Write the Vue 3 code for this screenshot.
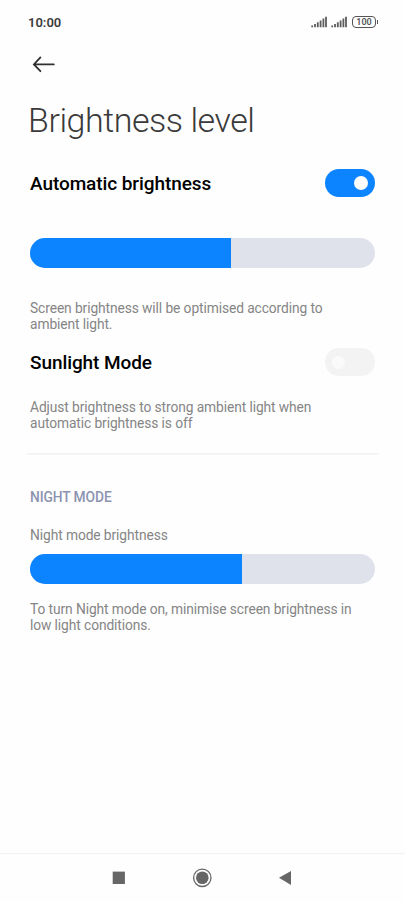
<template>
  <div class="screen">
    <header class="status">
      <span class="time">10:00</span>
      <div class="status-icons">
        <svg v-for="n in 2" :key="n" class="signal" width="16" height="12" viewBox="0 0 16 12">
          <path d="M1.2 11.2V9.4M4 11.2V8M6.8 11.2V6.2M9.6 11.2V4.4M12.4 11.2V2.6M15 11.2V.8" />
        </svg>
        <div class="battery"><span>100</span></div>
      </div>
    </header>

    <button class="back" type="button" aria-label="Back">
      <svg width="24" height="18" viewBox="0 0 24 18">
        <path d="M8.4 2.4L1.9 9.4l6.5 6.8M2.4 9.4h19.4" />
      </svg>
    </button>

    <h1 class="title">Brightness level</h1>

    <main class="content">
      <div class="row">
        <h2 class="label">Automatic brightness</h2>
        <button class="toggle" :class="{ on: auto }" type="button" @click="auto = !auto"></button>
      </div>
      <div class="slider slider-main">
        <div class="fill" :style="{ width: brightness + '%' }"></div>
      </div>
      <p class="text">Screen brightness will be optimised according to<br>ambient light.</p>

      <div class="row row-sunlight">
        <h2 class="label">Sunlight Mode</h2>
        <button class="toggle" :class="{ on: sunlight }" type="button" disabled></button>
      </div>
      <p class="text text-sunlight">Adjust brightness to strong ambient light when<br>automatic brightness is off</p>

      <hr class="divider">

      <h3 class="section">NIGHT MODE</h3>
      <p class="text">Night mode brightness</p>
      <div class="slider slider-night">
        <div class="fill" :style="{ width: nightBrightness + '%' }"></div>
      </div>
      <p class="text">To turn Night mode on, minimise screen brightness in<br>low light conditions.</p>
    </main>

    <nav class="nav">
      <svg width="14" height="20" viewBox="0 0 14 20"><rect x=".7" y="3.6" width="12.2" height="12.4" /></svg>
      <svg width="20" height="20" viewBox="0 0 20 20">
        <circle class="ring" cx="10.3" cy="9.8" r="8.7" />
        <circle cx="10.3" cy="9.8" r="6.3" />
      </svg>
      <svg width="14" height="20" viewBox="0 0 14 20"><path d="M13 2.9v14L1 9.8z" /></svg>
    </nav>
  </div>
</template>

<script setup>
import { ref } from 'vue'

const auto = ref(true)
const sunlight = ref(false)
const brightness = ref(58.2)
const nightBrightness = ref(61.4)
</script>

<style>
body {
  margin: 0;
  background: #fefefe;
}
</style>

<style scoped>
.screen {
  display: flex;
  flex-direction: column;
  height: 902px;
  box-sizing: border-box;
  background: #fefefe;
  font-family: Roboto, "Liberation Sans", sans-serif;
}
h1, h2, h3, p {
  margin: 0;
}
button {
  padding: 0;
  border: 0;
  background: none;
}
svg {
  display: block;
}
.status {
  display: flex;
  align-items: center;
  justify-content: space-between;
  height: 44px;
  padding: 0 27px 0 28px;
}
.time {
  padding-top: 2px;
  color: #3c3c3c;
  font-size: 13px;
  font-weight: 600;
  line-height: 16px;
}
.status-icons {
  display: flex;
  align-items: center;
  gap: 4px;
}
.signal path {
  fill: none;
  stroke: #5c5c5c;
  stroke-width: 1.8;
}
.battery {
  position: relative;
  width: 24px;
  height: 12px;
  margin: 0 2px 0 1px;
  box-sizing: border-box;
  border: 1.5px solid #555;
  border-radius: 4px;
  color: #555;
  font-size: 9px;
  font-weight: 600;
  line-height: 10px;
  text-align: center;
}
.battery::after {
  content: "";
  position: absolute;
  top: 3px;
  right: -3px;
  width: 1.5px;
  height: 4px;
  background: #555;
}
.back {
  width: 24px;
  height: 18px;
  margin: 11px 0 0 32px;
}
.back path {
  fill: none;
  stroke: #303030;
  stroke-width: 1.8;
  stroke-linecap: round;
}
.title {
  margin: 27px 0 0 28px;
  color: #3a3a3a;
  font-size: 34px;
  font-weight: 300;
  line-height: 40px;
  letter-spacing: -.46px;
}
.content {
  flex: 1;
  padding: 29px 30px 0;
}
.row {
  display: flex;
  align-items: center;
  justify-content: space-between;
  height: 28px;
}
.row-sunlight {
  margin-top: 16px;
}
.label {
  padding-top: 2px;
  color: #000;
  font-size: 19px;
  font-weight: 500;
  line-height: 28px;
  letter-spacing: -.08px;
}
.toggle {
  width: 50px;
  height: 28px;
  border-radius: 14px;
  background: #f3f3f3;
}
.toggle::before {
  content: "";
  display: block;
  width: 13px;
  height: 13px;
  margin-left: 7px;
  border-radius: 50%;
  background: #fafafa;
}
.toggle.on {
  background: #0d84ff;
}
.toggle.on::before {
  width: 14px;
  height: 14px;
  margin-left: 29px;
  background: #fff;
}
.slider {
  height: 30px;
  border-radius: 15px;
  background: #dfe1eb;
  overflow: hidden;
}
.slider-main {
  margin: 41px 0 32px;
}
.slider-night {
  margin: 11px 0 17px;
}
.fill {
  height: 100%;
  background: #0d84ff;
}
.text {
  color: #858585;
  font-size: 13.8px;
  line-height: 16px;
  letter-spacing: -.1px;
  white-space: nowrap;
}
.text-sunlight {
  margin-top: 23px;
}
.divider {
  height: 2px;
  margin: 22px -4px 34px -3px;
  border: 0;
  background: #f5f5f5;
}
.section {
  margin-bottom: 22px;
  color: #8c93b0;
  font-size: 13.8px;
  font-weight: 500;
  line-height: 16px;
  letter-spacing: -.1px;
}
.nav {
  display: flex;
  justify-content: center;
  gap: 66px;
  height: 49px;
  padding: 14px 1px 0 0;
  box-sizing: border-box;
  border-top: 1px solid #f2f2f2;
}
.nav svg {
  fill: #666;
}
.nav .ring {
  fill: none;
  stroke: #666;
  stroke-width: 1.3;
}
</style>
